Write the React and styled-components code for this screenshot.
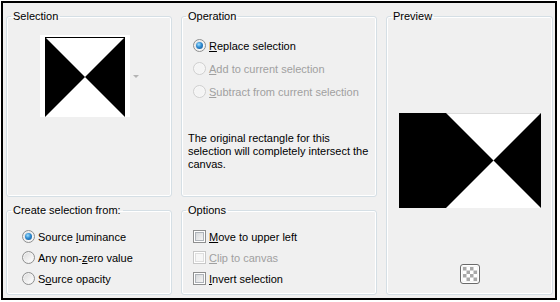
import React from 'react'
import styled, { createGlobalStyle } from 'styled-components'

const Global = createGlobalStyle`
  html, body { margin: 0; padding: 0; background: #fff; }
  body {
    font-family: "Segoe UI", "Liberation Sans", Arial, sans-serif;
    font-size: 11px;
    color: #000;
  }
`

const Dialog = styled.div`
  box-sizing: border-box;
  width: 556px;
  height: 299px;
  margin: 1px;
  border: 2px solid #000;
  background: #f0f0f0;
  display: grid;
  grid-template-columns: 166px 196px 167px;
  grid-template-rows: 189px 93px;
  column-gap: 9px;
  row-gap: 5px;
  padding: 5px 2px 0 3px;
`

const Group = styled.fieldset`
  margin: 0;
  padding: 0;
  min-width: 0;
  box-sizing: border-box;
  border: 1px solid #d5dfe5;
  border-radius: 3px;
  box-shadow: inset 0 0 0 1px #fff;
  display: flex;
  flex-direction: column;
  grid-row: ${p => (p.$tall ? '1 / span 2' : 'auto')};
  grid-column: ${p => (p.$tall ? '3' : 'auto')};
`

const Legend = styled.legend`
  margin-left: 4px;
  padding: 0 2px;
  line-height: 16px;
  font-size: 11px;
`

const ThumbRow = styled.div`
  display: flex;
  align-items: center;
  padding: 11px 0 0 33px;
`

const Thumb = styled.div`
  width: 90px;
  height: 82px;
  background: #fff;
  padding: 2px 5px 0 5px;
  box-sizing: border-box;
`

const DropArrow = styled.span`
  margin-left: 3px;
  width: 0;
  height: 0;
  border-left: 3px solid transparent;
  border-right: 3px solid transparent;
  border-top: 3px solid #b4b4b4;
`

const List = styled.div`
  display: flex;
  flex-direction: column;
  padding: ${p => p.$pad};
`

const Row = styled.label`
  display: flex;
  align-items: center;
  height: ${p => p.$h}px;
  gap: 3px;
  color: ${p => (p.$disabled ? '#a0a0a0' : '#000')};
  white-space: nowrap;
`

const Radio = styled.span`
  box-sizing: border-box;
  flex: none;
  width: 13px;
  height: 13px;
  border-radius: 50%;
  border: 1px solid ${p => (p.$disabled ? '#cfcfcf' : '#8e8f8f')};
  background: ${p =>
    p.$disabled ? '#f4f4f4' : 'linear-gradient(135deg, #d8d8d8 0%, #f6f6f6 70%, #fff 100%)'};
  box-shadow: inset 0 0 0 1px ${p => (p.$disabled ? '#f7f7f7' : '#f3f3f3')};
  display: flex;
  align-items: center;
  justify-content: center;
  &::after {
    content: '';
    display: ${p => (p.$checked ? 'block' : 'none')};
    width: 7px;
    height: 7px;
    border-radius: 50%;
    background: radial-gradient(circle at 40% 35%, #9ee0ff 0%, #2f8ad0 45%, #124f8c 100%);
  }
`

const Check = styled.span`
  box-sizing: border-box;
  flex: none;
  width: 13px;
  height: 13px;
  border: 1px solid ${p => (p.$disabled ? '#c8c8c8' : '#8e8f8f')};
  background: #fff;
  display: flex;
  align-items: center;
  justify-content: center;
  &::after {
    content: '';
    box-sizing: border-box;
    width: 9px;
    height: 9px;
    border: 1px solid ${p => (p.$disabled ? '#dedede' : '#aeb3b9')};
    background: ${p =>
      p.$disabled ? '#f6f6f6' : 'linear-gradient(135deg, #d7d9db 0%, #f4f4f4 100%)'};
  }
`

const Note = styled.p`
  margin: 29px 0 0 0;
  padding-left: 6px;
  line-height: 13px;
  width: 185px;
`

const PreviewArea = styled.div`
  display: flex;
  flex-direction: column;
  align-items: center;
  padding-top: 89px;
`

const TransparencyButton = styled.div`
  margin-top: 56px;
  width: 20px;
  height: 20px;
  box-sizing: border-box;
  border: 1px solid #6a6a6a;
  border-radius: 3px;
  background: #f4f4f4;
  box-shadow: inset 0 0 0 1px #fff;
  display: flex;
  align-items: center;
  justify-content: center;
`

function BowTie() {
  return (
    <svg width="80" height="80" viewBox="0 0 80 80">
      <rect width="80" height="80" fill="#fff" />
      <polygon points="0,0 40,40 0,80" fill="#000" />
      <polygon points="80,0 40,40 80,80" fill="#000" />
      <rect width="80" height="1" fill="#000" />
    </svg>
  )
}

function PreviewImage() {
  return (
    <svg width="142" height="95" viewBox="0 0 142 95">
      <rect width="142" height="95" fill="#fff" />
      <rect x="47" width="95" height="1" fill="#dcdcdc" />
      <rect width="47" height="95" fill="#000" />
      <polygon points="47,0 94.5,47.5 47,95" fill="#000" />
      <polygon points="142,0 94.5,47.5 142,95" fill="#000" />
    </svg>
  )
}

function Checker() {
  const cells = []
  for (let r = 0; r < 4; r++)
    for (let c = 0; c < 4; c++)
      if ((r + c) % 2 === 0)
        cells.push(<rect key={r + '-' + c} x={c * 3.5} y={r * 3.5} width="3.5" height="3.5" fill="#a9a9a9" />)
  return (
    <svg width="14" height="14" viewBox="0 0 14 14">
      <rect width="14" height="14" fill="#fff" />
      {cells}
    </svg>
  )
}

export default function App() {
  return (
    <>
      <Global />
      <Dialog>
        <Group>
          <Legend>Selection</Legend>
          <ThumbRow>
            <Thumb><BowTie /></Thumb>
            <DropArrow />
          </ThumbRow>
        </Group>

        <Group>
          <Legend>Operation</Legend>
          <List $pad="10px 0 0 11px">
            <Row $h={23}><Radio $checked /><span><u>R</u>eplace selection</span></Row>
            <Row $h={23} $disabled><Radio $disabled /><span><u>A</u>dd to current selection</span></Row>
            <Row $h={23} $disabled><Radio $disabled /><span><u>S</u>ubtract from current selection</span></Row>
          </List>
          <Note>The original rectangle for this selection will completely intersect the canvas.</Note>
        </Group>

        <Group $tall>
          <Legend>Preview</Legend>
          <PreviewArea>
            <PreviewImage />
            <TransparencyButton><Checker /></TransparencyButton>
          </PreviewArea>
        </Group>

        <Group>
          <Legend>Create selection from:</Legend>
          <List $pad="8px 0 0 15px">
            <Row $h={21}><Radio $checked /><span>Source <u>l</u>uminance</span></Row>
            <Row $h={21}><Radio /><span>Any non-<u>z</u>ero value</span></Row>
            <Row $h={21}><Radio /><span>S<u>o</u>urce opacity</span></Row>
          </List>
        </Group>

        <Group>
          <Legend>Options</Legend>
          <List $pad="8px 0 0 11px">
            <Row $h={21}><Check /><span><u>M</u>ove to upper left</span></Row>
            <Row $h={21} $disabled><Check $disabled /><span><u>C</u>lip to canvas</span></Row>
            <Row $h={21}><Check /><span><u>I</u>nvert selection</span></Row>
          </List>
        </Group>
      </Dialog>
    </>
  )
}
